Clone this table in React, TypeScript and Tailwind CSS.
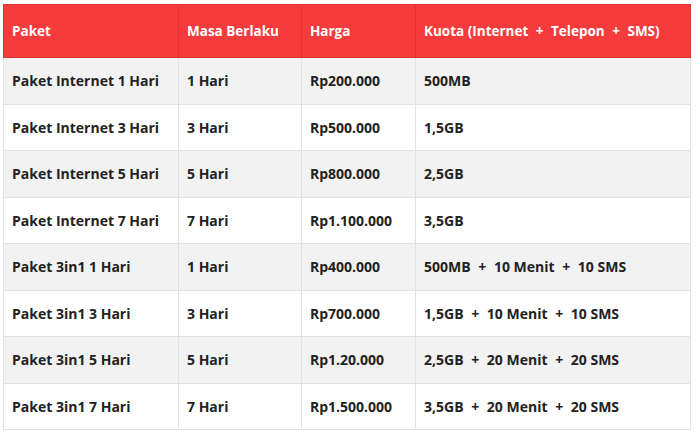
const rows: [string, string, string, string][] = [
	["Paket Internet 1 Hari", "1 Hari", "Rp200.000", "500MB"],
	["Paket Internet 3 Hari", "3 Hari", "Rp500.000", "1,5GB"],
	["Paket Internet 5 Hari", "5 Hari", "Rp800.000", "2,5GB"],
	["Paket Internet 7 Hari", "7 Hari", "Rp1.100.000", "3,5GB"],
	["Paket 3in1 1 Hari", "1 Hari", "Rp400.000", "500MB + 10 Menit + 10 SMS"],
	["Paket 3in1 3 Hari", "3 Hari", "Rp700.000", "1,5GB + 10 Menit + 10 SMS"],
	["Paket 3in1 5 Hari", "5 Hari", "Rp1.20.000", "2,5GB + 20 Menit + 20 SMS"],
	["Paket 3in1 7 Hari", "7 Hari", "Rp1.500.000", "3,5GB + 20 Menit + 20 SMS"],
];

const headers = ["Paket", "Masa Berlaku", "Harga", "Kuota (Internet + Telepon + SMS)"];
const widths = ["w-[175px]", "w-[123px]", "w-[114px]", "w-[275px]"];

// the "+" signs sit wider in the original font
function WithPlus({ text }: { text: string }) {
	const parts = text.split(" + ");
	return (
		<>
			{parts.map((p, i) => (
				<span key={i}>
					{i > 0 && <span className="mx-[4px]"> + </span>}
					{p}
				</span>
			))}
		</>
	);
}

export default function App() {
	return (
		<div className="h-[435px] w-[700px] bg-white pl-[3px] pt-[4px] font-['Open_Sans',sans-serif]">
			<table className="w-[687px] table-fixed border-collapse text-[14px] font-bold text-[#222]">
				<thead>
					<tr className="h-[53px] bg-[#f53b3b] text-white">
						{headers.map((h, i) => (
							<th
								key={h}
								className={`${widths[i]} border border-[#e03535] px-[8px] text-left text-[13.5px] font-bold`}
							>
								<WithPlus text={h} />
							</th>
						))}
					</tr>
				</thead>
				<tbody>
					{rows.map((row, r) => (
						<tr key={r} className={`h-[46.5px] ${r % 2 === 0 ? "bg-[#f2f2f2]" : "bg-white"}`}>
							{row.map((cell, c) => (
								<td key={c} className="border border-[#e2e2e2] px-[8px]">
									<WithPlus text={cell} />
								</td>
							))}
						</tr>
					))}
				</tbody>
			</table>
		</div>
	);
}
